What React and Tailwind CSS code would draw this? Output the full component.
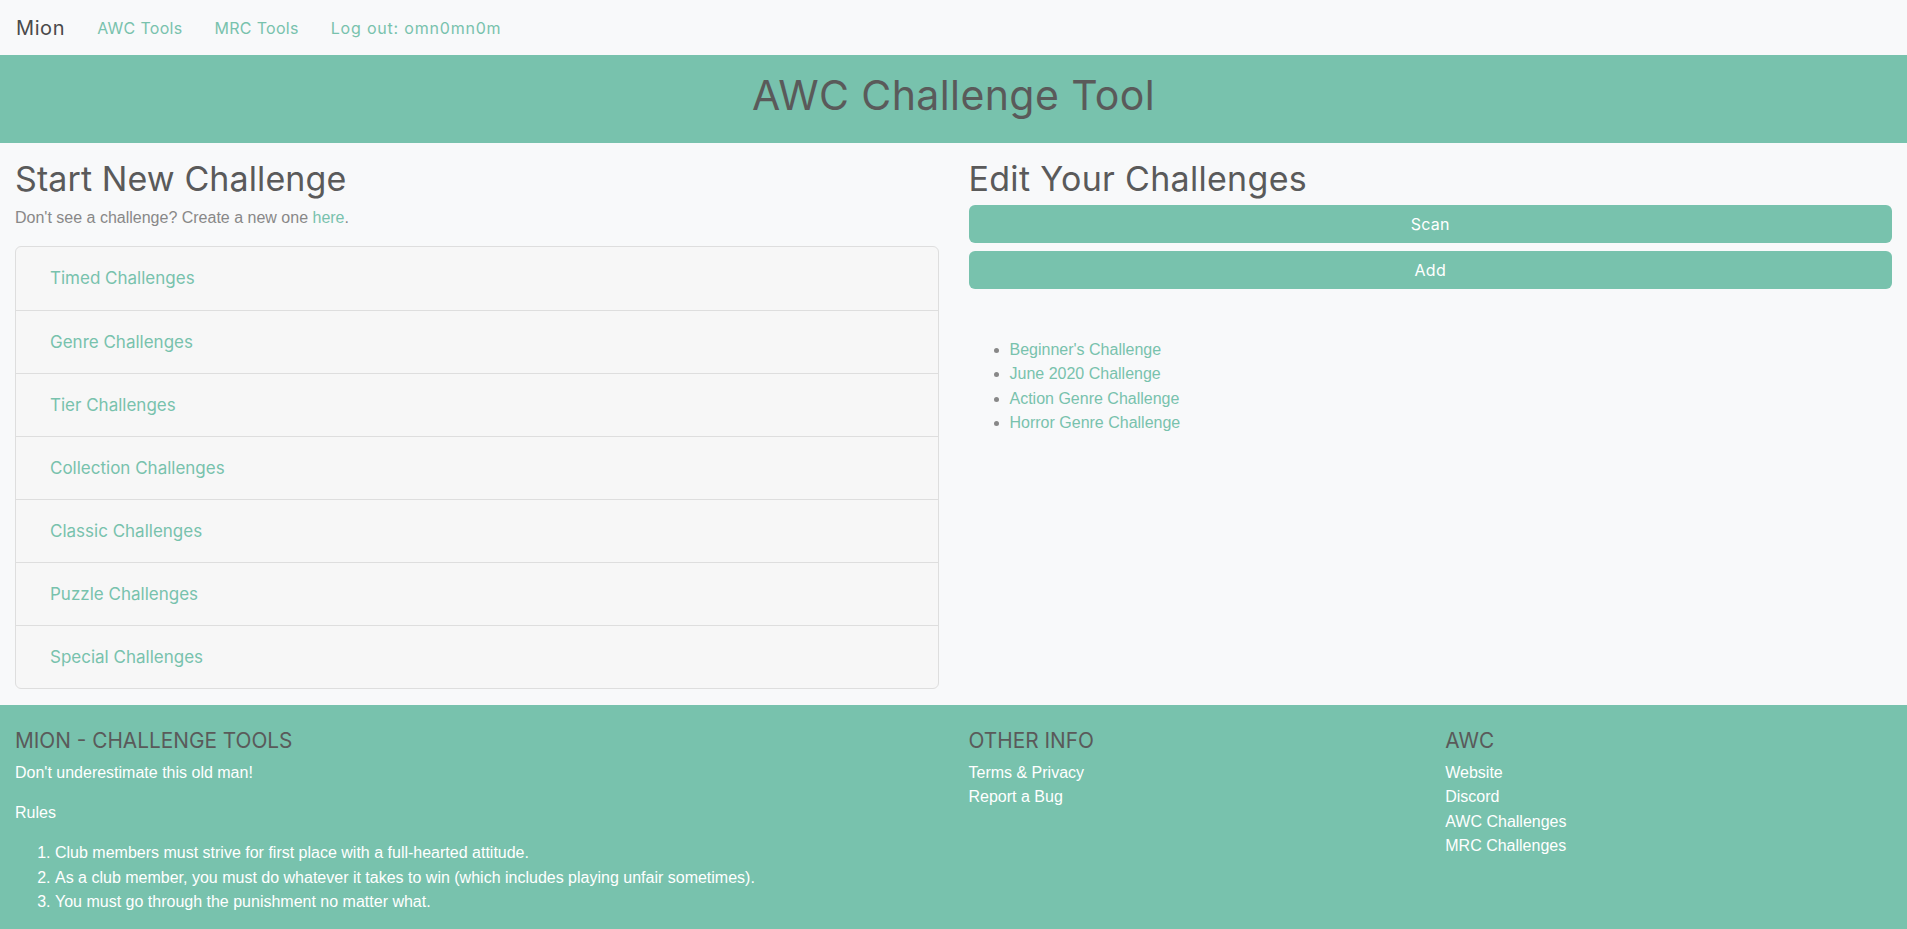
import React from "react";

const HF = "font-['Inter','Liberation_Sans',sans-serif]";

const challenges = [
  "Timed Challenges",
  "Genre Challenges",
  "Tier Challenges",
  "Collection Challenges",
  "Classic Challenges",
  "Puzzle Challenges",
  "Special Challenges",
];

const mine = [
  "Beginner's Challenge",
  "June 2020 Challenge",
  "Action Genre Challenge",
  "Horror Genre Challenge",
];

export default function App() {
  return (
    <div className="min-h-screen bg-[#f8f9fa] font-['Liberation_Sans',Arial,sans-serif] text-[16px] leading-[24px] text-[#888888]">
      {/* Navbar */}
      <nav className={`h-[55px] bg-[#f8f9fa] flex items-center pl-[16px] ${HF}`}>
        <span className="text-[20px] text-[#4a4a4a] tracking-[0.6px]">Mion</span>
        <a className="ml-[32px] text-[16px] text-[#78c2ad] tracking-[0.3px]">AWC Tools</a>
        <a className="ml-[32px] text-[16px] text-[#78c2ad] tracking-[0.3px]">MRC Tools</a>
        <a className="ml-[32px] text-[16px] text-[#78c2ad] tracking-[0.8px]">Log out: omn0mn0m</a>
      </nav>

      {/* Hero */}
      <header className="h-[88px] bg-[#78c2ad] flex items-center justify-center pb-[7px]">
        <h1 className={`${HF} text-[41px] leading-none text-[#5a5a5a] tracking-[0.4px]`}>
          AWC Challenge Tool
        </h1>
      </header>

      {/* Main */}
      <main className="px-[15px] pt-[17px] pb-[16px] grid grid-cols-2 gap-x-[30px]">
        <section>
          <h2 className={`${HF} text-[34px] leading-[38px] text-[#5a5a5a] mb-[8px] tracking-[0.1px]`}>
            Start New Challenge
          </h2>
          <p className="mb-[16px]">
            Don't see a challenge? Create a new one{" "}
            <a className="text-[#78c2ad]">here</a>.
          </p>
          <div className="border border-[#dedede] rounded-[6px] overflow-hidden bg-[#f7f7f7]">
            {challenges.map((c, i) => (
              <div
                key={c}
                className={`h-[63px] flex items-center pl-[34px] pb-[1px] ${i > 0 ? "border-t border-[#dedede]" : ""}`}
              >
                <a className={`${HF} text-[17px] text-[#78c2ad]`}>{c}</a>
              </div>
            ))}
          </div>
        </section>

        <section>
          <h2 className={`${HF} text-[34px] leading-[38px] text-[#5a5a5a] mb-[7px] tracking-[0.3px]`}>
            Edit Your Challenges
          </h2>
          <div className="flex flex-col gap-[8px]">
            <button className={`${HF} h-[38px] rounded-[6px] bg-[#78c2ad] text-white text-[16px] tracking-[0.3px]`}>
              Scan
            </button>
            <button className={`${HF} h-[38px] rounded-[6px] bg-[#78c2ad] text-white text-[16px] tracking-[0.3px]`}>
              Add
            </button>
          </div>
          <ul className="mt-[49px] pl-[41px] list-disc marker:text-[#888888]">
            {mine.map((m) => (
              <li key={m} className="leading-[24.3px]">
                <a className="text-[#78c2ad]">{m}</a>
              </li>
            ))}
          </ul>
        </section>
      </main>

      {/* Footer */}
      <footer className="bg-[#78c2ad] px-[15px] pt-[24px] pb-[16px] grid grid-cols-[923.5px_446.75px_1fr] gap-x-[30px]">
        <div>
          <h5 className={`${HF} text-[20.8px] leading-[24px] text-[#5a5a5a] uppercase mb-[8px]`}>
            Mion - Challenge Tools
          </h5>
          <p className="text-white mb-[16px]">Don't underestimate this old man!</p>
          <p className="text-white mb-[16px]">Rules</p>
          <ol className="list-decimal pl-[40px] text-white">
            <li className="leading-[24.5px]">Club members must strive for first place with a full-hearted attitude.</li>
            <li className="leading-[24.5px]">As a club member, you must do whatever it takes to win (which includes playing unfair sometimes).</li>
            <li className="leading-[24.5px]">You must go through the punishment no matter what.</li>
          </ol>
        </div>
        <div>
          <h5 className={`${HF} text-[20.8px] leading-[24px] text-[#5a5a5a] uppercase mb-[8px]`}>
            Other Info
          </h5>
          <ul className="text-white">
            <li className="leading-[24.3px]"><a>Terms &amp; Privacy</a></li>
            <li className="leading-[24.3px]"><a>Report a Bug</a></li>
          </ul>
        </div>
        <div>
          <h5 className={`${HF} text-[20.8px] leading-[24px] text-[#5a5a5a] uppercase mb-[8px]`}>
            AWC
          </h5>
          <ul className="text-white">
            <li className="leading-[24.3px]"><a>Website</a></li>
            <li className="leading-[24.3px]"><a>Discord</a></li>
            <li className="leading-[24.3px]"><a>AWC Challenges</a></li>
            <li className="leading-[24.3px]"><a>MRC Challenges</a></li>
          </ul>
        </div>
      </footer>
    </div>
  );
}
